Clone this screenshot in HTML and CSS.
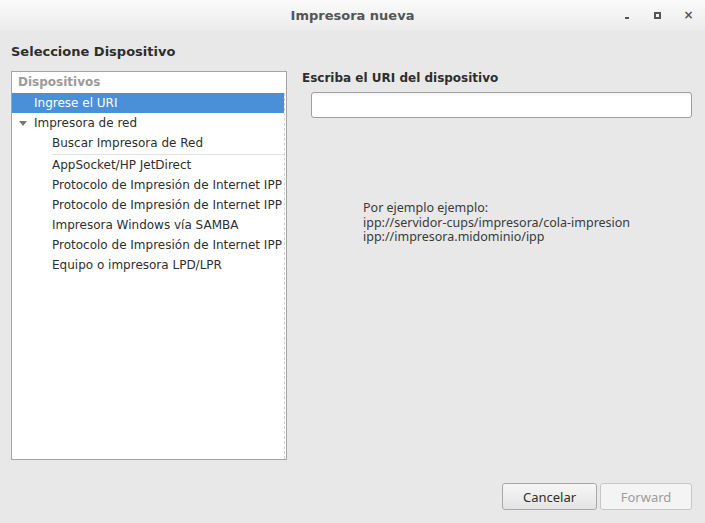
FILE: index.html
```html
<!DOCTYPE html>
<html lang="es">
<head>
    <meta charset="UTF-8">
    <meta name="viewport" content="width=device-width, initial-scale=1.0">
    <title>Impresora nueva</title>
    <link rel="stylesheet" href="styles.css">
</head>
<body>
    <div class="titlebar">
        <div></div>
        <div class="title">Impresora nueva</div>
        <div class="controls">
            <span class="ctl ctl-min"></span>
            <span class="ctl ctl-max"></span>
            <span class="ctl ctl-close">&#215;</span>
        </div>
    </div>

    <div class="dialog">
        <h1>Seleccione Dispositivo</h1>

        <div class="content">
            <div class="tree">
                <div class="tree-header">Dispositivos</div>
                <div class="tree-body">
                    <div class="row selected level-1">Ingrese el URI</div>
                    <div class="row level-1 expander"><span class="arrow"></span>Impresora de red</div>
                    <div class="row level-2">Buscar Impresora de Red</div>
                    <div class="separator"></div>
                    <div class="row level-2">AppSocket/HP JetDirect</div>
                    <div class="row level-2">Protocolo de Impresión de Internet IPP</div>
                    <div class="row level-2">Protocolo de Impresión de Internet IPP</div>
                    <div class="row level-2">Impresora Windows vía SAMBA</div>
                    <div class="row level-2">Protocolo de Impresión de Internet IPP</div>
                    <div class="row level-2">Equipo o impresora LPD/LPR</div>
                </div>
            </div>

            <div class="uri-panel">
                <label for="uri">Escriba el URI del dispositivo</label>
                <input type="text" id="uri">
                <div class="example">
                    Por ejemplo ejemplo:<br>
                    ipp://servidor-cups/impresora/cola-impresion<br>
                    ipp://impresora.midominio/ipp
                </div>
            </div>
        </div>

        <div class="actions">
            <button type="button" class="btn">Cancelar</button>
            <button type="button" class="btn" disabled>Forward</button>
        </div>
    </div>
</body>
</html>
```

FILE: styles.css
```css
body {
  margin: 0;
  font-family: "DejaVu Sans", sans-serif;
  font-size: 12px;
  color: #2e2e2e;
  background: #e8e8e8;
  height: 523px;
  overflow: hidden;
}

.titlebar {
  height: 30px;
  display: grid;
  grid-template-columns: 1fr auto 1fr;
  align-items: center;
  background: linear-gradient(#fbfbfb, #ececec);
}

.title {
  font-weight: bold;
  font-size: 13px;
  color: #555;
  padding-top: 1px;
}

.controls {
  display: flex;
  justify-content: flex-end;
  align-items: center;
  padding-right: 1px;
}

.ctl {
  width: 31px;
  height: 14px;
  display: flex;
  align-items: center;
  justify-content: center;
  color: #555;
}

.ctl-min::after {
  content: "";
  width: 4px;
  height: 2px;
  background: #555;
  margin-top: 5px;
}

.ctl-max::after {
  content: "";
  width: 3px;
  height: 3px;
  border: 2px solid #555;
}

.ctl-close {
  font-weight: bold;
  font-size: 12px;
}

.dialog {
  padding: 0 13px 0 11px;
}

h1 {
  font-size: 13px;
  font-weight: bold;
  color: #2e2e2e;
  margin: 0;
  padding: 13px 0 11px;
  line-height: 17px;
}

.content {
  display: flex;
  gap: 15px;
}

.tree {
  width: 274px;
  height: 387px;
  border: 1px solid #a5a5a5;
  background: #fff;
  flex: none;
}

.tree-header {
  height: 21px;
  line-height: 20px;
  padding-left: 6px;
  font-weight: bold;
  color: #9a9a9a;
}

.tree-body {
  margin-right: 1px;
  border-right: 1px dashed #d0d0d0;
  height: 366px;
}

.row {
  height: 20px;
  line-height: 20px;
  white-space: nowrap;
  overflow: hidden;
}

.level-1 {
  padding-left: 22px;
}

.level-2 {
  padding-left: 40px;
}

.selected {
  background: #4a90d9;
  color: #fff;
}

.expander {
  position: relative;
}

.arrow {
  position: absolute;
  left: 7px;
  top: 8px;
  border-left: 4px solid transparent;
  border-right: 4px solid transparent;
  border-top: 5px solid #777;
}

.separator {
  height: 1px;
  margin: 1px 0 0 40px;
  background: #e2e2e2;
}

.uri-panel {
  flex: 1;
  display: flex;
  flex-direction: column;
}

label {
  font-weight: bold;
  font-size: 12px;
  line-height: 14px;
  margin-bottom: 7px;
}

input[type="text"] {
  margin-left: 9px;
  height: 26px;
  box-sizing: border-box;
  border: 1px solid #a0a0a0;
  border-radius: 3px;
  background: linear-gradient(#f4f4f4, #fff 4px);
}

.example {
  font-family: "Noto Sans", sans-serif;
  font-size: 12.5px;
  line-height: 14.5px;
  color: #3a3a3a;
  margin: 83px 0 0 61px;
}

.actions {
  display: flex;
  justify-content: flex-end;
  gap: 3px;
  margin-top: 23px;
}

.btn {
  height: 27px;
  font-family: "Noto Sans", sans-serif;
  font-size: 13px;
  color: #2e2e2e;
  border: 1px solid #a8a8a8;
  border-radius: 3px;
  background: linear-gradient(#f6f6f6, #e4e4e4);
}

.btn:first-child {
  width: 95px;
}

.btn[disabled] {
  width: 92px;
  color: #9c9c9c;
  border-color: #c6c6c6;
  background: #f4f4f4;
}
```
